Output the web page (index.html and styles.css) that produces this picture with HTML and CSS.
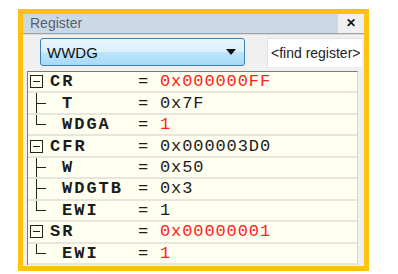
FILE: index.html
```html
<!DOCTYPE html>
<html lang="en">
<head>
    <meta charset="UTF-8">
    <title>Register</title>
    <link rel="stylesheet" href="styles.css">
</head>
<body>
    <div class="frame">
        <div class="titlebar">
            <div class="title">Register</div>
            <div class="close">&#x2715;</div>
        </div>
        <div class="toolbar">
            <div class="combo">
                <span>WWDG</span>
                <svg class="arrow" width="10" height="6" viewBox="0 0 10 6"><path d="M0 0H10L5 6Z" fill="#111"/></svg>
            </div>
            <div class="find">&lt;find register&gt;</div>
        </div>
        <div class="grid">
            <div class="row">
                <div class="name"><span class="box"></span>CR</div>
                <div class="eq">=</div>
                <div class="val red">0x000000FF</div>
            </div>
            <div class="row">
                <div class="name child"><span class="branch"></span>T</div>
                <div class="eq">=</div>
                <div class="val">0x7F</div>
            </div>
            <div class="row">
                <div class="name child"><span class="branch last"></span>WDGA</div>
                <div class="eq">=</div>
                <div class="val red">1</div>
            </div>
            <div class="row">
                <div class="name"><span class="box"></span>CFR</div>
                <div class="eq">=</div>
                <div class="val">0x000003D0</div>
            </div>
            <div class="row">
                <div class="name child"><span class="branch"></span>W</div>
                <div class="eq">=</div>
                <div class="val">0x50</div>
            </div>
            <div class="row">
                <div class="name child"><span class="branch"></span>WDGTB</div>
                <div class="eq">=</div>
                <div class="val">0x3</div>
            </div>
            <div class="row">
                <div class="name child"><span class="branch last"></span>EWI</div>
                <div class="eq">=</div>
                <div class="val">1</div>
            </div>
            <div class="row">
                <div class="name"><span class="box"></span>SR</div>
                <div class="eq">=</div>
                <div class="val red">0x00000001</div>
            </div>
            <div class="row">
                <div class="name child"><span class="branch last"></span>EWI</div>
                <div class="eq">=</div>
                <div class="val red">1</div>
            </div>
        </div>
    </div>
</body>
</html>
```

FILE: styles.css
```css
body {
    margin: 0;
    background: #fff;
    font-family: "Liberation Sans", Arial, sans-serif;
}

.frame {
    margin: 9px 0 0 18px;
    width: 341px;
    height: 252px;
    border: 5px solid #ffc20e;
    background: #f0f0f0;
    overflow: hidden;
}

.titlebar {
    display: flex;
    height: 19px;
    border-bottom: 1px solid #a0a0a0;
    box-shadow: 0 1px 0 #dcdcdc;
}

.title {
    flex: 1;
    background: #cbd9e7;
    color: #566270;
    font-size: 14px;
    line-height: 19px;
    padding-left: 7px;
}

.close {
    width: 26px;
    text-align: center;
    font-size: 12px;
    font-weight: bold;
    line-height: 19px;
    color: #111;
}

.toolbar {
    display: flex;
    align-items: center;
    gap: 22px;
    margin: 4px 0 0 17px;
    height: 28px;
}

.combo {
    width: 189px;
    height: 26px;
    border: 1px solid #3c7fb1;
    border-radius: 3px;
    background: linear-gradient(#eaf6fd, #d9f0fc 50%, #bee6fd 50%, #a7d9f5);
    display: flex;
    align-items: center;
    justify-content: space-between;
    padding: 0 8px 0 6px;
    box-sizing: content-box;
    font-size: 15px;
    color: #111;
}

.find {
    flex: 1;
    height: 29px;
    line-height: 28px;
    background: #fff;
    border-left: 1px solid #e2e2e2;
    border-top: 1px solid #e2e2e2;
    box-sizing: border-box;
    padding-left: 3px;
    margin-right: 2px;
    font-size: 14px;
    color: #222;
    white-space: nowrap;
    overflow: hidden;
}

.grid {
    margin: 5px 0 0 4px;
    width: 331px;
    height: 194px;
    box-sizing: border-box;
    border-top: 1px solid #7a7a7a;
    border-left: 1px solid #7a7a7a;
    border-right: 1px solid #d6d6d6;
    background: #fffff0;
    display: flex;
    flex-direction: column;
}

.row {
    flex: 1;
    display: flex;
    align-items: stretch;
    border-bottom: 2px solid #e6e6dc;
    font-family: "Liberation Mono", "Courier New", monospace;
    font-size: 17px;
    color: #1c1c1c;
}

.name {
    width: 110px;
    display: flex;
    align-items: center;
    font-weight: bold;
    letter-spacing: 2px;
}

.box {
    width: 11px;
    height: 11px;
    margin: 0 7px 0 2px;
    border: 1px solid #222;
    background: linear-gradient(#222, #222) center / 7px 1px no-repeat;
}

.branch {
    align-self: stretch;
    width: 10px;
    margin: 0 16px 0 8px;
    background:
        linear-gradient(#222, #222) 0 0 / 1px 100% no-repeat,
        linear-gradient(#222, #222) 0 50% / 10px 1px no-repeat;
}

.branch.last {
    background:
        linear-gradient(#222, #222) 0 0 / 1px 50% no-repeat,
        linear-gradient(#222, #222) 0 50% / 10px 1px no-repeat;
}

.eq {
    width: 22px;
    display: flex;
    align-items: center;
}

.val {
    display: flex;
    align-items: center;
    letter-spacing: 0.9px;
}

.red {
    color: #ff2020;
}
```
